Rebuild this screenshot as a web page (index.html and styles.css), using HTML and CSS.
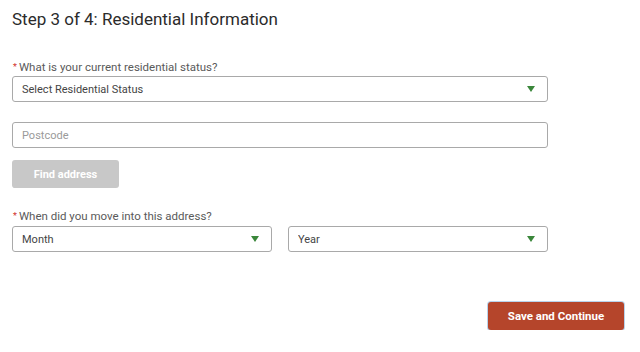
FILE: index.html
```html
<!DOCTYPE html>
<html lang="en">
<head>
  <meta charset="UTF-8" />
  <title>Residential Information</title>
  <link rel="stylesheet" href="styles.css">
</head>
<body>
  <div class="container">
    <h1>Step 3 of 4: Residential Information</h1>

    <div class="field status-field">
      <label class="field-label"><span class="req">*</span>What is your current residential status?</label>
      <div class="select-wrap">
        <select class="select">
          <option>Select Residential Status</option>
        </select>
        <span class="arrow"></span>
      </div>
    </div>

    <div class="field postcode-field">
      <input class="input" type="text" placeholder="Postcode">
    </div>

    <button class="find-btn" disabled>Find address</button>

    <div class="field move-field">
      <label class="field-label"><span class="req">*</span>When did you move into this address?</label>
      <div class="date-row">
        <div class="select-wrap">
          <select class="select">
            <option>Month</option>
          </select>
          <span class="arrow"></span>
        </div>
        <div class="select-wrap">
          <select class="select">
            <option>Year</option>
          </select>
          <span class="arrow"></span>
        </div>
      </div>
    </div>

    <div class="footer-actions">
      <button class="save-btn">Save and Continue</button>
    </div>
  </div>
</body>
</html>
```

FILE: styles.css
```css
body {
  font-family: Roboto, 'Liberation Sans', sans-serif;
  background-color: #fff;
  color: #333;
  margin: 0;
  padding: 0;
}

.container {
  padding: 0 16px 0 12px;
}

h1 {
  font-size: 17px;
  font-weight: 400;
  line-height: 24px;
  color: #2b2b2b;
  margin: 7px 0 0;
}

.field {
  width: 536px;
}

.status-field {
  margin-top: 29px;
}

.field-label {
  display: block;
  font-size: 11.5px;
  line-height: 14px;
  color: #5a5a5a;
  margin-bottom: 2px;
}

.req {
  color: #d0312d;
  font-size: 9px;
  vertical-align: top;
  margin: 0 2px 0 1px;
}

.select-wrap {
  position: relative;
}

.select,
.input {
  display: block;
  width: 100%;
  height: 26px;
  box-sizing: border-box;
  border: 1px solid #a9a9a9;
  border-radius: 3px;
  background: #fff;
  font-family: Roboto, 'Liberation Sans', sans-serif;
  font-size: 11px;
  color: #444;
  padding: 0 9px;
  margin: 0;
  outline: none;
}

.select {
  appearance: none;
  -webkit-appearance: none;
}

.input::placeholder {
  color: #9a9a9a;
}

.arrow {
  position: absolute;
  right: 13px;
  top: 10px;
  width: 0;
  height: 0;
  border-left: 4.5px solid transparent;
  border-right: 4.5px solid transparent;
  border-top: 6px solid #3b873b;
  pointer-events: none;
}

.postcode-field {
  margin-top: 20px;
}

.find-btn {
  display: block;
  margin-top: 12px;
  width: 107px;
  height: 28px;
  border: none;
  border-radius: 3px;
  background-color: #c8c8c8;
  color: #fff;
  font-family: Roboto, 'Liberation Sans', sans-serif;
  font-size: 11px;
  font-weight: bold;
}

.move-field {
  margin-top: 21px;
}

.move-field .field-label {
  margin-bottom: 3px;
}

.date-row {
  display: flex;
  gap: 16px;
}

.date-row .select-wrap {
  width: 260px;
}

.footer-actions {
  display: flex;
  justify-content: flex-end;
  margin-top: 50px;
}

.save-btn {
  width: 136px;
  height: 28px;
  border: none;
  border-radius: 3px;
  background-color: #b5452b;
  box-shadow: 0 0 0 1px #b9d3ec;
  color: #fff;
  font-family: Roboto, 'Liberation Sans', sans-serif;
  font-size: 11.5px;
  font-weight: bold;
  cursor: pointer;
}
```
